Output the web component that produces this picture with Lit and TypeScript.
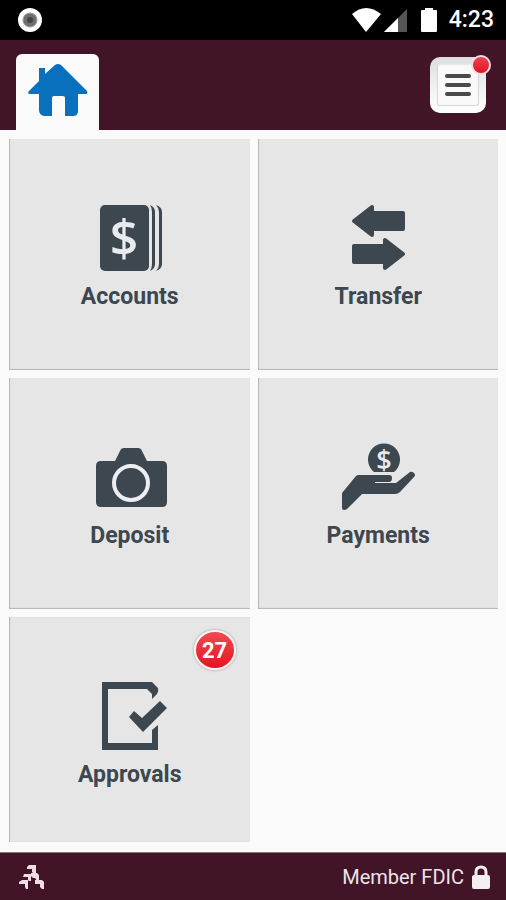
import { LitElement, html, css, svg } from "lit";
import { customElement } from "lit/decorators.js";

const icons = {
  accounts: svg`
    <rect x="10" y="7" width="49" height="66" rx="5"/>
    <path d="M60 7Q65 9 65 14V66Q65 71 60 73Q62 70 62 66V14Q62 10 60 7Z"/>
    <path d="M66 7Q72 9 72 14V66Q72 71 66 73Q69 70 69 66V14Q69 10 66 7Z"/>
    <text class="dollar" x="34" y="58" font-size="50">$</text>`,
  transfer: svg`
    <g stroke="#3c474f" stroke-width="4" stroke-linejoin="round">
      <path d="M16 23L34 9V15H65V31H34V37Z"/>
      <path d="M65 56L47 42V48H16V64H47V70Z"/>
    </g>`,
  deposit: svg`
    <path d="M11 24H25L30 14Q31 11 34 11H48Q51 11 52 14L57 24H72Q77 24 77 29V65Q77 70 72 70H11Q6 70 6 65V29Q6 24 11 24Z"/>
    <circle class="ring" cx="41" cy="46" r="17"/>`,
  payments: svg`
    <path d="M36 35A16 16 0 1 1 56 35Z"/>
    <text class="dollar" x="46" y="33" font-size="27">$</text>
    <path d="M21 38H51Q54 38 54 41Q54 45 51 45H37V46H58L72 35Q74 34 76 36Q78 38 76 40L62 55Q60 57 57 57H24L10 71Q9 73 6 73Q4 73 4 71V56L18 39Q19 38 21 38Z"/>`,
  approvals: svg`
    <path d="M12 6H62L68 12Q69 15 67 18L62 23V18L57 13H18V67H62V54L68 49V74H12Z"/>
    <path d="M39 41L44 35L52 42L70 25L77 32L53 56Z"/>`,
};

const tiles: { name: string; icon: keyof typeof icons; count?: number }[] = [
  { name: "Accounts", icon: "accounts" },
  { name: "Transfer", icon: "transfer" },
  { name: "Deposit", icon: "deposit" },
  { name: "Payments", icon: "payments" },
  { name: "Approvals", icon: "approvals", count: 27 },
];

@customElement("app-root")
export class AppRoot extends LitElement {
  static styles = css`
    :host {
      display: flex;
      flex-direction: column;
      min-height: 100vh;
      background: #fafafa;
      font-family: Roboto, "Liberation Sans", sans-serif;
      color: #3c474f;
    }
    * { box-sizing: border-box; }
    svg { display: block; }
    button { font: inherit; color: inherit; border: 0; padding: 0; cursor: pointer; }
    .status {
      display: flex;
      align-items: center;
      height: 40px;
      padding: 0 12px 0 18px;
      background: #000;
      color: #fff;
    }
    .signals { display: flex; align-items: center; margin-left: auto; }
    .time { margin-left: 11px; font-size: 23px; line-height: 28px; font-weight: 500; }
    .bar {
      display: flex;
      justify-content: space-between;
      align-items: flex-end;
      height: 90px;
      padding: 0 20px 0 16px;
      background: #411427;
    }
    .home {
      display: flex;
      justify-content: center;
      width: 83px;
      height: 76px;
      padding-top: 10px;
      border-radius: 6px 6px 0 0;
      background: #fafafa;
    }
    .menu {
      position: relative;
      display: flex;
      width: 56px;
      height: 56px;
      margin-bottom: 17px;
      padding: 7px;
      border-radius: 10px;
      background: linear-gradient(#dcdddf, #f2f3f4 60%, #fff);
    }
    .lines {
      flex: 1;
      display: flex;
      flex-direction: column;
      justify-content: center;
      align-items: center;
      gap: 5px;
      border: 1px solid #d5d7d8;
      border-top-color: #e8e8e8;
      border-radius: 3px;
      background: #f9f9f9;
    }
    .line { width: 26px; height: 4px; border-radius: 2px; background: #4a4a4b; }
    .dot {
      position: absolute;
      top: -2px;
      right: -5px;
      width: 20px;
      height: 20px;
      border: 2px solid #f3dde0;
      border-radius: 50%;
      background: linear-gradient(#f2404c, #dc1526);
    }
    .grid {
      flex: 1;
      display: grid;
      grid-template-columns: 1fr 1fr;
      grid-template-rows: 231px 231px 1fr;
      gap: 8px;
      padding: 9px 8px 10px 9px;
    }
    .tile {
      position: relative;
      display: flex;
      flex-direction: column;
      align-items: center;
      padding: 59px 0 0 1px;
      background: #e6e6e6;
      box-shadow: inset 1px -1px 1px #b4b4b4;
    }
    .tile.last { box-shadow: inset 1px 0 1px #b4b4b4; }
    .icon { width: 80px; height: 80px; fill: #3c474f; }
    .dollar {
      font-family: "Open Sans", sans-serif;
      font-weight: 600;
      text-anchor: middle;
      fill: #e8eaf0;
    }
    .ring { fill: none; stroke: #eceef2; stroke-width: 4px; }
    .label { margin-top: 5px; font-size: 23px; line-height: 28px; font-weight: 700; }
    .count {
      position: absolute;
      top: 13px;
      right: 14px;
      width: 42px;
      height: 40px;
      border: 2px solid #faf3f3;
      border-radius: 50%;
      background: linear-gradient(#f04a50, #e41422);
      box-shadow: 0 0 3px #999;
      color: #fff;
      font-size: 22px;
      line-height: 37px;
      font-weight: 700;
      text-align: center;
    }
    .foot {
      display: flex;
      align-items: center;
      height: 48px;
      padding: 0 16px 0 18px;
      border-top: 1px solid #8b7079;
      background: #411427;
      color: #ece4e8;
      font-size: 20px;
      line-height: 24px;
    }
    .member { display: flex; align-items: center; gap: 8px; margin-left: auto; }
  `;

  render() {
    return html`
      <div class="status">
        <svg width="24" height="24" viewBox="0 0 24 24">
          <circle cx="12" cy="12" r="12" fill="#fff"/>
          <circle cx="12" cy="12" r="7" fill="#6f6f6f" stroke="#999" stroke-width="1"/>
          <circle cx="12" cy="12" r="3" fill="#444"/>
        </svg>
        <div class="signals">
          <svg width="86" height="24" viewBox="0 0 86 24" fill="#fff">
            <path d="M0 6Q14 -6 29 6L14 24Z"/>
            <path d="M55 1V24H32Z" fill="#555"/>
            <path d="M46 10V24H32Z"/>
            <path d="M73 0H81V2H84Q85 2 85 3V23Q85 24 84 24H70Q69 24 69 23V3Q69 2 70 2H73Z"/>
          </svg>
          <span class="time">4:23</span>
        </div>
      </div>
      <header class="bar">
        <button class="home" aria-label="Home">
          <svg width="60" height="53" viewBox="0 0 60 53" fill="#0870bd">
            <path d="M11 4H17V10L27 1Q30 -1 33 1L59 27Q60 30 58 30H50V47Q50 52 45 52H37V34Q37 32 35 32H26Q24 32 24 34V52H16Q11 51 11 46V30H2Q-1 30 1 27L11 17Z"/>
          </svg>
        </button>
        <button class="menu" aria-label="Menu">
          <span class="lines">
            <span class="line"></span><span class="line"></span><span class="line"></span>
          </span>
          <span class="dot"></span>
        </button>
      </header>
      <main class="grid">
        ${tiles.map((t, i) => html`
          <button class="tile ${i === tiles.length - 1 ? "last" : ""}">
            <svg class="icon" viewBox="0 0 80 80" aria-hidden="true">${icons[t.icon]}</svg>
            <span class="label">${t.name}</span>
            ${t.count ? html`<span class="count">${t.count}</span>` : ""}
          </button>`)}
      </main>
      <footer class="foot">
        <svg width="28" height="24" viewBox="0 0 28 24" fill="#f0dce6">
          <path d="M11 0H18V9H16L14 7V4H9V2Z"/>
          <path d="M6 9H13V16H11L10 15V12H5Z"/>
          <path d="M13 8H19L21 10V16H19L17 13H15L13 11Z"/>
          <path d="M4 15H10V24H8L7 22V19H1V17Z"/>
          <path d="M17 15H24L26 17V24H24L22 22V19H17Z"/>
        </svg>
        <span class="member">
          Member FDIC
          <svg width="18" height="24" viewBox="0 0 18 24">
            <path d="M4 12V7Q4 2 9 2Q14 2 14 7V12" fill="none" stroke="#f2eff1" stroke-width="3"/>
            <rect y="10" width="18" height="14" rx="2" fill="#f2eff1"/>
          </svg>
        </span>
      </footer>`;
  }
}
